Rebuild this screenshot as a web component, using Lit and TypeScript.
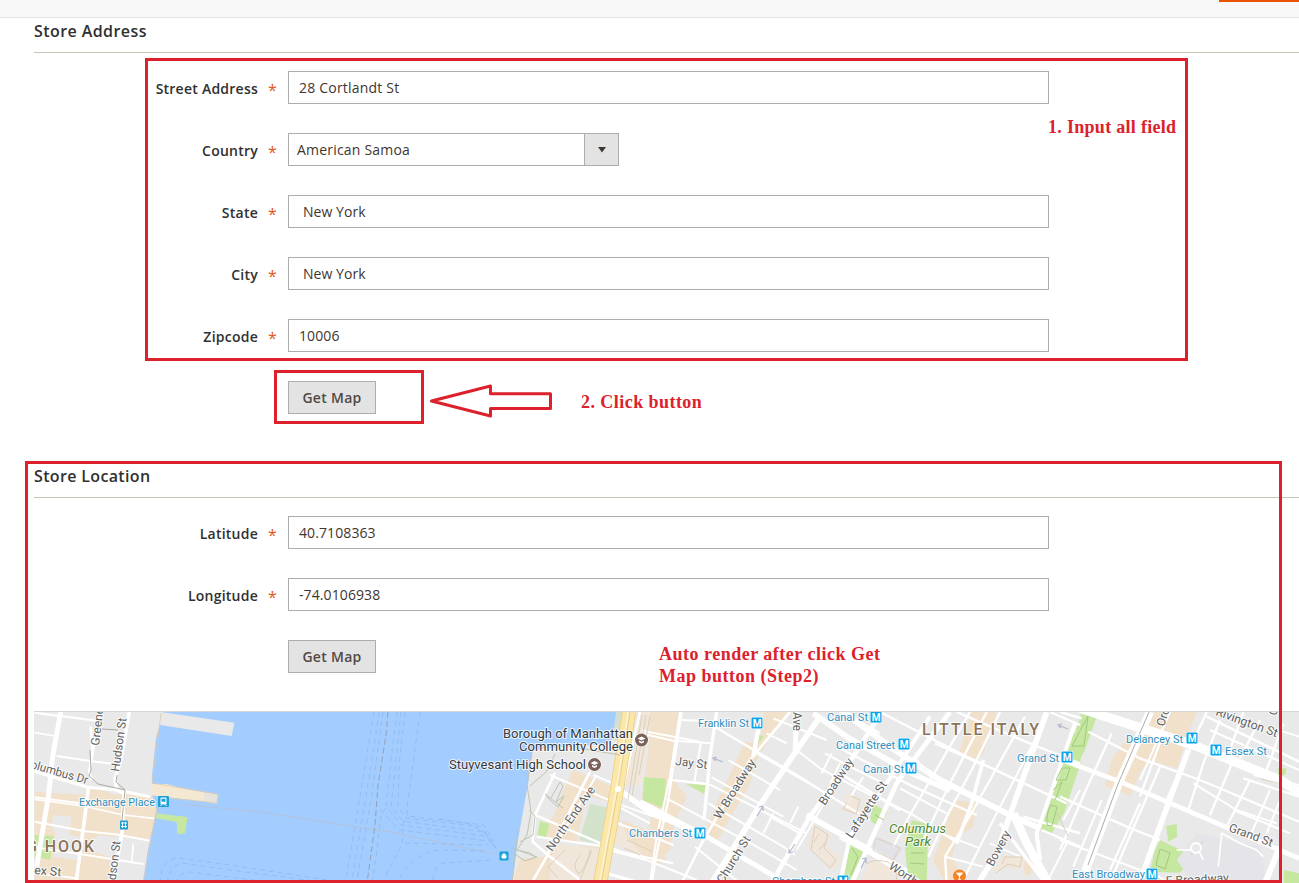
import { LitElement, html, svg, css } from "lit";
import { customElement, property } from "lit/decorators.js";

type Area = [string, string];
type Road = [number, string];
interface Tile { x: number; areas: Area[]; roads: Road[]; }

const SAND = "#f1e0ca";
const GREEN = "#c6e7a0";
const BLOCK = "#f0e7da";

/* Each tile is a column of the map, three units to the pixel. */
const tiles: Tile[] = [
  {
    x: 0,
    areas: [
      [SAND, "M104 275L250 285L265 262L310 270L345 285L372 272L455 288L470 292L500 325L470 345L455 425L365 412L300 405L240 440L330 470L325 549L104 549Z"],
      ["#e9e9e9", "M160 345L215 350L208 405L238 410L232 480L160 470L165 400L155 375Z"],
      [GREEN, "M104 405L160 408L150 480L104 470Z"],
      ["#e9e9e9", "M482 36L703 68L695 108L475 74Z"],
      ["#f5e8d3", "M456 252L500 252L560 268L655 284L651 311L600 303L500 292L452 285Z"],
      ["#e6e2dc", "M612 280L655 285L651 310L610 304Z"],
      [GREEN, "M470 340L562 351L556 400L532 403L530 366L468 355Z"],
    ],
    roads: [
      [15, "M182 36L158 170L145 290L110 500"],
      [6, "M104 38L180 48L290 62"], [5, "M104 98L165 108"], [6, "M170 168L275 184L345 192"],
      [5, "M104 298L250 318L370 345L468 356"], [6, "M104 292L240 310"],
      [6, "M104 365L255 394L345 403L450 422"], [6, "M104 442L240 462L430 492"], [6, "M104 520L230 535"],
      [11, "M388 36L362 180L345 235L350 270L372 280L366 400L338 549"],
      [11, "M265 265L252 370L228 549"], [8, "M272 80L278 150L268 215L275 240"],
      [9, "M104 215L265 262L350 270L450 290"], [6, "M300 36L275 180"],
      [5, "M400 430L395 490"],
    ],
  },
  {
    x: 440,
    areas: [
      ["#d5dfd0", "M526 36L550 36L535 120L510 120Z"],
      [BLOCK, "M590 36L640 36L600 260L548 250Z"],
      [SAND, "M640 36L720 36L690 300L660 430L620 420L640 320L605 300Z"],
      [SAND, "M400 210L530 265L518 310L440 285L410 425L290 405L340 350L375 260Z"],
      [GREEN, "M612 232L678 236L668 320L608 300Z"],
      [GREEN, "M300 362L328 372L318 412L292 405Z"],
      ["#d2e2cb", "M450 312L500 322L480 432L418 420Z"],
      [SAND, "M240 475L310 470L345 435L475 440L460 549L218 549Z"],
      [BLOCK, "M350 430L475 448L458 549L330 540L330 480Z"],
      [BLOCK, "M535 370L650 420L630 480L520 430Z"],
      [SAND, "M545 360L640 400L680 480L640 500L560 410Z"],
    ],
    roads: [
      [6, "M330 225L530 310L700 370"], [8, "M345 218L285 345L278 425L330 470L420 540"],
      [7, "M285 345L400 395L540 455L700 490"], [8, "M450 215L320 470L275 549"],
      [6, "M470 225L420 310L350 430"], [6, "M460 225L520 250"], [16, "M530 264L620 330L790 408"],
      [6, "M535 320L630 370"], [7, "M520 365L600 395L700 435"], [6, "M505 450L620 480L770 540"],
      [7, "M600 36L550 260"], [10, "M500 520L600 549"], [6, "M290 410L500 440"],
      [6, "M720 36L690 230L650 410L630 549"], [6, "M605 92L780 125"], [6, "M690 240L790 250"],
    ],
  },
  {
    x: 640,
    areas: [
      [SAND, "M30 36L120 36L100 240L140 290L100 380L90 450L60 480L40 465L70 340L20 290Z"],
      [SAND, "M372 36L440 36L350 180L330 250L225 435L200 390L225 320L315 125L360 130Z"],
      [GREEN, "M15 232L78 236L70 325L10 300Z"],
      [GREEN, "M138 252L200 254L192 282Z"],
      [GREEN, "M352 102L370 110L350 140Z"],
      [BLOCK, "M620 280L665 298L650 345L605 325Z"],
      [BLOCK, "M520 372L575 405L560 440L605 480L580 510L500 440Z"],
      [GREEN, "M700 312L742 335L715 380L690 360Z"],
      [GREEN, "M630 430L682 460L640 540L612 535Z"],
      ["#e2e2e7", "M715 410L790 445L765 480L700 445Z"],
    ],
    roads: [
      [7, "M125 36L100 200L85 300L50 460L35 549"], [10, "M230 36L210 170L192 360"], [6, "M182 130L162 252"],
      [8, "M450 36L330 180L185 430L125 549"], [13, "M358 70L340 170"],
      [17, "M540 50L460 165L370 300L215 549"], [15, "M470 36L465 165"],
      [14, "M725 36L640 170L510 350L395 549"], [12, "M870 50L740 250L630 410L600 549"],
      [15, "M0 305L200 410L405 530"], [6, "M0 100L100 122L215 130"], [6, "M125 60L225 64"],
      [7, "M220 78L470 225L625 322"], [6, "M400 55L560 120"], [6, "M100 240L210 254L430 365L500 400"],
      [6, "M205 310L430 440L465 465"], [6, "M80 295L350 440L470 510"], [6, "M350 160L515 255L690 360"],
      [6, "M380 100L440 130"], [6, "M215 232L430 350"], [6, "M265 180L420 270"],
      [6, "M555 160L620 195L720 245"], [6, "M470 150L540 205L720 300"], [6, "M390 350L480 400"],
      [18, "M500 345L680 445L800 515"], [17, "M520 40L620 110L780 200"], [7, "M605 36L720 100"],
      [6, "M575 160L545 220"], [6, "M475 320L450 370"], [6, "M620 200L540 330L470 450"],
      [6, "M165 440L300 549"], [6, "M400 340L370 400"], [6, "M600 190L570 250"], [6, "M670 230L620 310"],
    ],
  },
  {
    x: 840,
    areas: [
      [SAND, "M395 36L470 36L430 160L405 180L355 165Z"],
      [SAND, "M345 300L408 310L400 380L350 410L335 470L375 549L315 549L280 480Z"],
      [GREEN, "M215 360L265 372L260 549L205 549L195 440Z"],
      [GREEN, "M700 100L730 100L720 195L672 340L632 405L602 390Z"],
      [GREEN, "M35 430L82 460L40 540L10 540Z"],
      [BLOCK, "M95 480L150 500L165 549L60 549Z"],
      [BLOCK, "M485 465L550 470L545 510L500 500L455 520Z"],
      [SAND, "M555 480L580 490L570 530L550 520Z"],
    ],
    roads: [
      [18, "M0 28L150 140L300 240L520 350L600 385"], [16, "M170 200L330 272"],
      [14, "M330 36L220 180L170 250L80 450L35 549"], [7, "M390 36L210 345L160 440"],
      [7, "M440 36L330 250L250 420"], [7, "M480 36L400 200L320 350L265 470"],
      [7, "M555 50L400 330L315 470L320 549"], [6, "M590 110L470 340L370 540"],
      [17, "M620 36L510 345L470 460L415 549"], [12, "M705 70L650 230L590 400L600 480"],
      [25, "M520 340L560 430L625 549"], [10, "M480 370L540 450L615 549"], [11, "M430 180L395 310L350 430"],
      [7, "M120 36L360 160L520 235L680 310"], [7, "M285 130L430 195"], [7, "M350 36L580 135L720 190"],
      [7, "M0 145L220 260L410 345"], [6, "M180 265L320 340"], [6, "M250 380L420 445"],
      [6, "M110 290L220 345L355 430"], [6, "M315 470L430 500"], [8, "M0 220L180 330"],
      [15, "M0 410L95 460L240 549"], [8, "M550 350L720 400"], [6, "M450 430L540 470"],
      [6, "M680 430L620 549"], [7, "M630 36L720 75"], [7, "M605 390L720 440"],
      [6, "M720 270L670 360"], [6, "M230 180L270 230"],
    ],
  },
  {
    x: 1060,
    areas: [
      [SAND, "M285 36L410 36L385 100L350 205L270 180L240 215L210 290L185 275L135 260L155 180L190 130L235 100Z"],
      [GREEN, "M65 36L115 36L75 150L35 225L10 310L-40 400L-25 310L20 180Z"],
      [GREEN, "M318 378L350 372L352 410L325 425Z"],
      [GREEN, "M300 420L405 470L360 518L270 515L285 450Z"],
      [GREEN, "M475 490L495 495L490 520L475 515Z"],
      [GREEN, "M655 205L680 205L675 225L655 225Z"],
      [GREEN, "M672 510L717 520L717 549L672 549Z"],
      ["#e4e4e9", "M410 400L600 440L620 549L400 549L350 480Z"],
    ],
    roads: [
      [28, "M60 25L400 135L660 240L730 285"], [25, "M270 36L178 245L75 515"],
      [17, "M385 150L325 310L245 530"], [14, "M-20 170L180 245L490 378L717 475"],
      [7, "M155 100L80 265L0 450"], [6, "M125 300L40 500"], [7, "M240 310L150 510"],
      [7, "M300 200L200 430L150 549"], [7, "M310 100L240 290"], [7, "M440 36L320 300"],
      [7, "M480 60L430 190L385 330"], [7, "M520 180L450 345"], [7, "M570 240L500 380"],
      [7, "M600 60L540 175"], [7, "M550 36L510 150"], [7, "M670 70L620 210"], [6, "M630 270L570 410"],
      [7, "M85 95L240 175L420 240L717 365"], [7, "M0 290L200 380L300 420"], [7, "M0 420L240 510"],
      [8, "M440 50L717 185"], [6, "M450 90L717 210"], [6, "M520 330L690 400"], [7, "M550 235L717 290"],
      [6, "M400 250L530 330L650 370"], [6, "M660 300L620 400"], [18, "M660 440L615 549"],
      [5, "M475 500L485 400L540 430L590 450L610 470"], [5, "M350 450L390 450L410 440L430 480"],
      [6, "M270 515L330 549"], [7, "M0 36L65 55"], [6, "M330 36L240 240"], [6, "M717 110L640 85"],
      [6, "M580 225L717 255"],
    ],
  },
];

interface Label { x: number; y: number; t: string; c: string; w: number; r?: number; }
const labels: Label[] = [
  { x: 79, y: 806, t: "Exchange Place", c: "transit", w: 76 },
  { x: 698, y: 727, t: "Franklin St", c: "transit", w: 51 },
  { x: 827, y: 721, t: "Canal St", c: "transit", w: 41 },
  { x: 836, y: 749, t: "Canal Street", c: "transit", w: 59 },
  { x: 863, y: 773, t: "Canal St", c: "transit", w: 41 },
  { x: 629, y: 837, t: "Chambers St", c: "transit", w: 63 },
  { x: 772, y: 885, t: "Chambers St", c: "transit", w: 63 },
  { x: 1017, y: 762, t: "Grand St", c: "transit", w: 42 },
  { x: 1126, y: 743, t: "Delancey St", c: "transit", w: 57 },
  { x: 1225, y: 755, t: "Essex St", c: "transit", w: 42 },
  { x: 1072, y: 878, t: "East Broadway", c: "transit", w: 73 },
  { x: 503, y: 738, t: "Borough of Manhattan", c: "poi", w: 130 },
  { x: 519, y: 751, t: "Community College", c: "poi", w: 114 },
  { x: 449, y: 769, t: "Stuyvesant High School", c: "poi", w: 137 },
  { x: 889, y: 833, t: "Columbus", c: "park", w: 57 },
  { x: 905, y: 846, t: "Park", c: "park", w: 26 },
  { x: 922, y: 735, t: "LITTLE ITALY", c: "area", w: 117 },
  { x: 26, y: 852, t: "G HOOK", c: "area", w: 68 },
  { x: 99, y: 746, t: "Greene", c: "road", w: 38, r: -83 },
  { x: 119, y: 772, t: "Hudson St", c: "road", w: 54, r: -82 },
  { x: 30, y: 768, t: "olumbus Dr", c: "road", w: 59, r: 16 },
  { x: 34, y: 874, t: "ex St", c: "road", w: 27, r: 5 },
  { x: 114, y: 895, t: "Hudson St", c: "road", w: 54, r: -83 },
  { x: 552, y: 852, t: "North End Ave", c: "road", w: 76, r: -55 },
  { x: 675, y: 765, t: "Jay St", c: "road", w: 32, r: 7 },
  { x: 720, y: 820, t: "W Broadway", c: "road", w: 68, r: -58 },
  { x: 723, y: 884, t: "Church St", c: "road", w: 53, r: -58 },
  { x: 825, y: 806, t: "Broadway", c: "road", w: 53, r: -57 },
  { x: 852, y: 839, t: "Lafayette St", c: "road", w: 65, r: -57 },
  { x: 793, y: 712, t: "Ave", c: "road", w: 19, r: 90 },
  { x: 888, y: 868, t: "Worth St", c: "road", w: 46, r: 34 },
  { x: 993, y: 867, t: "Bowery", c: "road", w: 38, r: -62 },
  { x: 1164, y: 727, t: "Orchard", c: "road", w: 42, r: -72 },
  { x: 1215, y: 715, t: "Rivington St", c: "road", w: 65, r: 20 },
  { x: 1228, y: 831, t: "Grand St", c: "road", w: 46, r: 20 },
  { x: 1166, y: 885, t: "E Broadway", c: "road", w: 63, r: -3 },
  { x: 1276, y: 716, t: "Clinton", c: "road", w: 34, r: -72 },
];

const stations = [[757, 723], [876, 717], [904, 744], [911, 768], [700, 833], [843, 881], [1067, 757], [1192, 738], [1216, 750], [1152, 874]];

const WATER = "M161 712L616 712L614 728L610 744L570 746L532 750L529 778L523 812L518 840L512 884L143 884L147 855L150 840L155 817L157 810L152 795L152 775L156 738L160 724Z";

@customElement("city-map")
export class CityMap extends LitElement {
  static styles = css`
    :host { display: block; height: 100%; }
    svg { display: block; width: 100%; height: 100%; font-family: Roboto, "Noto Sans", sans-serif; }
    .halo { paint-order: stroke; stroke: #fff; stroke-width: 2px; stroke-linejoin: round; stroke-opacity: .8; }
    .transit { font-size: 11px; fill: #2f8fc0; }
    .poi { font-size: 13px; fill: #333a40; }
    .park { font-size: 13px; font-style: italic; fill: #4f8a2c; }
    .area { font-size: 16px; font-weight: 500; fill: #8b7358; }
    .road { font-size: 12px; fill: #62625f; }
    .metro { font-size: 10px; font-weight: 700; fill: #fff; text-anchor: middle; }
    .line { fill: none; stroke-linejoin: round; }
    .ferry { fill: none; stroke: #8fb5e8; stroke-width: .7; stroke-dasharray: 5 4; }
    .limit { fill: none; stroke: #93a2b8; stroke-width: 1; stroke-dasharray: 6 3; }
    .tunnel { fill: none; stroke: #b5c3da; stroke-width: 1; }
    .path { fill: none; stroke: #bfc5b4; stroke-width: 1; }
    .rail { fill: none; stroke: #a3a397; stroke-width: .9; }
    .detail { fill: none; stroke: #d9ccb8; stroke-width: .9; }
    .edge { fill: none; stroke: #9dc47c; stroke-width: .9; }
  `;

  render() {
    const at = (t: Tile) => `translate(${t.x} 700) scale(.33333)`;
    return html`<svg viewBox="34 712 1265 171" preserveAspectRatio="xMinYMin slice">
      <rect x="34" y="712" width="1265" height="171" fill="#e9e9e9"></rect>
      ${tiles.map((t) => svg`<g transform=${at(t)}>${t.areas.slice(0, t.x === 0 ? 3 : 99).map(([f, d]) => svg`<path d=${d} fill=${f}></path>`)}</g>`)}
      ${tiles.map((t) => svg`<g transform=${at(t)} class="line" stroke="#fff">${t.roads.map(([w, d]) => svg`<path d=${d} stroke-width=${w}></path>`)}</g>`)}
      <path d=${WATER} fill="#a3ccff"></path>
      <g transform=${at(tiles[0])}>${tiles[0].areas.slice(3).map(([f, d]) => svg`<path d=${d} fill=${f}></path>`)}</g>
      <path class="detail" d="M161 713L158 738L156 748L152 783L218 794L217 803L160 797M157 808L150 845L143 883"></path>

      <path class="tunnel" d="M180 804L260 812L390 832L495 854"></path>
      <path class="limit" d="M388 712L386 735L378 785L375 825L367 883"></path>
      <path class="ferry" d="M374 712L346 880M379 712L372 760L352 880M383 712L371 800L357 880M397 712L391 760L386 806L401 825L485 836L496 848M401 712L395 770L391 807L403 821L484 832L496 848M405 712L399 765L398 807L406 818L482 827L496 848M420 712L407 808L407 816L484 825L494 842M386 808L381 815L377 850L372 883M380 810L390 820L400 830L488 841M404 820L402 845L385 877M405 843L488 845M400 878Q415 852 440 850L488 851M433 880Q434 864 445 863L494 860"></path>
      <path class="ferry" d="M160 883Q160 860 178 858L230 865L340 882M167 883Q170 866 182 863L230 870L330 883M175 883Q180 872 190 872L260 881M440 819L470 824L490 836"></path>

      <path class="line" d="M629 712L617 790L600 884" stroke="#e8ce83" stroke-width="14"></path>
      <path class="line" d="M629 712L617 790L600 884" stroke="#fbe8a8" stroke-width="12.500"></path>
      <path class="line" d="M629 712L617 790L600 884" stroke="#fdf3d2" stroke-width="3"></path>
      <path class="line" d="M630 712L618 790L601 884" stroke="#e9cf85" stroke-width="1.200"></path>
      <circle cx="618" cy="789" r="3" fill="#fff"></circle>
      <path class="path" d="M532 752L527 785L531 812L527 835L517 850L530 853L535 857M555 754L546 772L530 786M567 746L620 755M529 810L535 816L533 835L520 842M551 798L560 782L563 786L556 802L564 796L558 807L550 800L545 794L563 808"></path>
      <path class="path" d="M512 848L537 857L525 861L512 852M518 830L512 883"></path>
      <path class="detail" d="M565 850L548 867L558 878M581 855Q570 865 579 874Q588 864 590 850M642 715L628 800M646 715L632 796M650 716L639 775M592 850L580 880M627 840L653 852M624 848L640 855M851 796L860 800L856 814L843 809ZM815 826L828 835L824 848L836 860L830 868L811 850ZM819 834L814 842M826 842L819 850M876 838L900 848L893 860L873 850ZM866 864Q875 858 888 862Q900 870 896 882M1002 864L1005 857L1022 857L1020 867L1008 864L996 873"></path>
      <path class="edge" d="M1088 716L1072 746L1084 746ZM1062 768L1070 768L1066 780L1056 780ZM1053 790L1062 782L1055 800M1047 825Q1046 813 1051 805L1057 807L1052 826ZM1160 849L1170 853L1165 869L1156 865ZM911 853L924 853M910 863L924 864M875 815L884 820M852 848L858 857L851 875"></path>
      <path class="rail" d="M1149 712L1118 784L1088 865M90 750L91 770L89 776L98 784L125 790M117 775L116 782L125 790L121 830M102 729L118 730"></path>
      <path class="detail" d="M1056 811L1068 836M1261 779L1282 784M1203 841L1191 855"></path>
      <circle cx="1196" cy="848" r="5" fill="#e9e9e9" stroke="#fff" stroke-width="2"></circle>
      <g fill="none" stroke="#b3b7cf" stroke-width="1.200">
        <path d="M723 762L713 758M717 757l-4 1l3 3M757 816L763 806M759 807l4-1v5M795 844L789 853M789 849v4l4-1M861 868L866 858M862 859l4-1v5M1068 729L1058 725M1062 724l-4 1l3 3"></path>
      </g>

      ${labels.map((l) => svg`<text class=${"halo " + l.c} textLength=${l.w} lengthAdjust=${l.c === "area" ? "spacing" : "spacingAndGlyphs"} transform="translate(${l.x} ${l.y}) rotate(${l.r ?? 0})">${l.t}</text>`)}
      ${stations.map(([x, y]) => svg`<g transform="translate(${x} ${y})"><rect x="-6" y="-6" width="12" height="12" rx="1" fill="#fff"></rect><rect x="-5.5" y="-5.5" width="11" height="11" rx="1" fill="#0ba5ea"></rect><text class="metro" y="3.6">M</text></g>`)}

      <g transform="translate(163.500 801.500)">
        <rect x="-5.500" y="-5.500" width="11" height="11" rx="1" fill="#1ca0d8"></rect>
        <rect x="-3" y="-4" width="6" height="7" rx="1" fill="#fff"></rect><rect x="-2" y="-2.800" width="4" height="3" fill="#1ca0d8"></rect>
        <path d="M-2 3L-3 4.500M2 3L3 4.500" stroke="#fff"></path>
      </g>
      <g transform="translate(124 825)">
        <rect x="-4" y="-4.500" width="8" height="9" rx="1" fill="#1ca0d8"></rect>
        <path d="M-3 -2H3M-3 1.500H3M-1.500 -3V3M1.500 -3V3" stroke="#fff" stroke-width=".9"></path>
      </g>
      <g transform="translate(504 856)">
        <rect x="-4.500" y="-4.500" width="9" height="9" rx="1" fill="#1ca0d8"></rect>
        <path d="M-3 -.5H3L2 2.500H-2ZM-1.500 -2.500H1.500V0H-1.500Z" fill="#fff"></path>
      </g>
      ${[[641.5, 740], [594.5, 764.5]].map(([x, y]) => svg`<g transform="translate(${x} ${y})"><circle r="7" fill="#fff"></circle><circle r="6.500" fill="#7a625b"></circle><path d="M-4 -1.500L0 -3.500L4 -1.500L0 .5ZM-2.500 .5L0 1.800L2.500 .5V2.300L0 3.500L-2.500 2.300Z" fill="#fff"></path></g>`)}
      <g transform="translate(959.500 876)">
        <circle r="6.500" fill="#f58424"></circle>
        <path d="M-3 -3H3L0 .5ZM0 0V3M-1.500 3.300H1.500" fill="#fff" stroke="#fff" stroke-width=".9"></path>
      </g>
    </svg>`;
  }
}

@customElement("form-field")
export class FormField extends LitElement {
  @property() label = "";
  @property() value = "";
  @property() kind = "text";

  static styles = css`
    :host { display: grid; grid-template-columns: 258px 1fr; column-gap: 30px; height: 33px; }
    .label { display: flex; justify-content: flex-end; position: relative; font-size: 14px; font-weight: 550; letter-spacing: .24px; line-height: 36px; color: #303030; white-space: nowrap; }
    .star { position: absolute; left: 268px; top: 1px; color: #e2571a; font-size: 16px; font-weight: 400; }
    .input { box-sizing: border-box; width: 761px; height: 33px; border: 1px solid #adadad; padding-left: 10px; font-size: 14px; line-height: 32px; color: #41362f; letter-spacing: .1px; white-space: pre; }
    .letters { letter-spacing: .2px; }
    .spaced { padding-left: 14px; letter-spacing: .05px; }
    .select { box-sizing: border-box; display: flex; width: 331px; height: 33px; border: 1px solid #adadad; font-size: 14px; line-height: 32px; color: #41362f; letter-spacing: .2px; }
    .choice { flex: 1; padding-left: 8px; }
    .arrow { width: 33px; display: grid; place-items: center; background: #e3e3e3; border-left: 1px solid #adadad; }
    .button { box-sizing: border-box; width: 88px; height: 33px; border: 1px solid #adadad; background: #e3e3e3; color: #514943; font-size: 14px; font-weight: 550; letter-spacing: .3px; line-height: 32px; text-align: center; }
  `;

  render() {
    const look = this.kind === "spaced" ? "spaced" : /[a-z]/.test(this.value) ? "letters" : "";
    const control = this.kind === "button"
      ? html`<div class="button">${this.value}</div>`
      : this.kind === "select"
        ? html`<div class="select"><span class="choice">${this.value}</span><span class="arrow"><svg width="8" height="6"><path d="M0 0H8L4 5.500Z" fill="#41362f"></path></svg></span></div>`
        : html`<div class="input ${look}">${this.value}</div>`;
    return html`<div class="label">${this.label}${this.label ? html`<span class="star">*</span>` : ""}</div>${control}`;
  }
}

@customElement("app-root")
export class AppRoot extends LitElement {
  static styles = css`
    :host { display: block; position: relative; width: 1299px; height: 883px; overflow: hidden; background: #fff; font-family: "Open Sans", "Noto Sans", sans-serif; }
    .bar { box-sizing: border-box; display: flex; justify-content: flex-end; height: 18px; background: #f8f8f8; border-bottom: 1px solid #e3e3e3; }
    .save { width: 80px; height: 2px; background: #eb5202; }
    .title { box-sizing: border-box; margin: 0 0 0 34px; height: 35px; border-bottom: 1px solid #c4c4b8; font-size: 16px; font-weight: 600; letter-spacing: .42px; line-height: 26px; color: #303030; }
    .fields { display: flex; flex-direction: column; gap: 29px; padding-top: 18px; }
    .second { margin-top: 49px; letter-spacing: .35px; }
    .map { margin: 38px 0 0 34px; height: 171px; border-top: 1px solid #d6d6d6; }
    .marks { position: absolute; inset: 0; width: 1299px; height: 883px; }
    .note { position: absolute; font: 700 18px/22px "Liberation Serif", serif; color: #dc212c; white-space: nowrap; }
    .one { left: 1048px; top: 116px; letter-spacing: .3px; }
    .two { left: 581px; top: 391px; letter-spacing: .45px; }
    .three { left: 659px; top: 643px; letter-spacing: .5px; }
  `;

  render() {
    return html`
      <div class="bar"><div class="save"></div></div>
      <div class="title">Store Address</div>
      <div class="fields">
        <form-field label="Street Address" value="28 Cortlandt St"></form-field>
        <form-field label="Country" value="American Samoa" kind="select"></form-field>
        <form-field label="State" value="New York" kind="spaced"></form-field>
        <form-field label="City" value="New York" kind="spaced"></form-field>
        <form-field label="Zipcode" value="10006"></form-field>
        <form-field value="Get Map" kind="button"></form-field>
      </div>
      <div class="title second">Store Location</div>
      <div class="fields">
        <form-field label="Latitude" value="40.7108363"></form-field>
        <form-field label="Longitude" value="-74.0106938"></form-field>
        <form-field value="Get Map" kind="button"></form-field>
      </div>
      <div class="map"><city-map></city-map></div>
      <svg class="marks" viewBox="0 0 1299 883" fill="none" stroke="#dc212c" stroke-width="3">
        <rect x="146.500" y="59.500" width="1040" height="300"></rect>
        <rect x="275.500" y="371.500" width="147" height="51"></rect>
        <rect x="26.500" y="462.500" width="1254" height="419"></rect>
        <path d="M431.500 401L490.500 386V393.800H550.500V408.500H490.500V416L431.500 401Z" stroke-width="3" stroke-linejoin="round"></path>
      </svg>
      <div class="note one">1. Input all field</div>
      <div class="note two">2. Click button</div>
      <div class="note three">Auto render after click Get<br>Map button (Step2)</div>
    `;
  }
}
